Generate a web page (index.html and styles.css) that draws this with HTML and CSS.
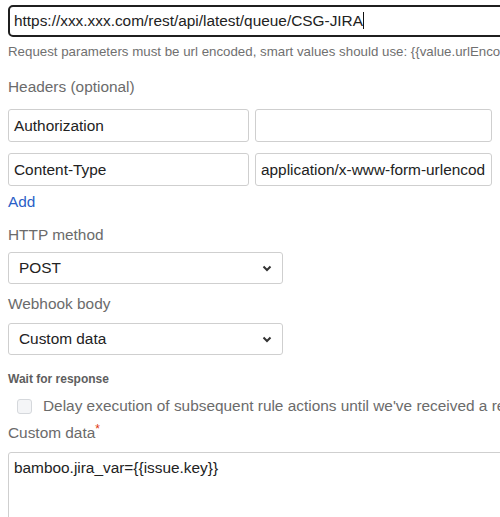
FILE: index.html
```html
<!DOCTYPE html>
<html lang="en">
<head>
    <meta charset="UTF-8">
    <title>Webhook</title>
    <link rel="stylesheet" href="styles.css">
</head>
<body>
    <div class="form">
        <div class="url-input">https://xxx.xxx.com/rest/api/latest/queue/CSG-JIRA<span class="caret"></span></div>
        <div class="help">Request parameters must be url encoded, smart values should use: {{value.urlEncode}}</div>

        <div class="label headers-label">Headers (optional)</div>
        <div class="header-row">
            <div class="field key">Authorization</div>
            <div class="field value"></div>
        </div>
        <div class="header-row">
            <div class="field key">Content-Type</div>
            <div class="field value">application/x-www-form-urlencod</div>
        </div>
        <a class="add">Add</a>

        <div class="label method-label">HTTP method</div>
        <div class="select">
            <span>POST</span>
            <svg width="10" height="7" viewBox="0 0 10 7"><path d="M1.5 1.5 L5 5 L8.5 1.5" fill="none" stroke="#333" stroke-width="2"/></svg>
        </div>

        <div class="label body-label">Webhook body</div>
        <div class="select">
            <span>Custom data</span>
            <svg width="10" height="7" viewBox="0 0 10 7"><path d="M1.5 1.5 L5 5 L8.5 1.5" fill="none" stroke="#333" stroke-width="2"/></svg>
        </div>

        <div class="wait-label">Wait for response</div>
        <div class="check-row">
            <span class="checkbox"></span>
            <span>Delay execution of subsequent rule actions until we've received a response</span>
        </div>

        <div class="label data-label">Custom data<span class="req">*</span></div>
        <div class="textarea">bamboo.jira_var={{issue.key}}</div>
    </div>
</body>
</html>
```

FILE: styles.css
```css
html, body {
    margin: 0;
    padding: 0;
    background: white;
    overflow: hidden;
}
body {
    width: 500px;
    height: 517px;
    font-family: "Liberation Sans", Arial, sans-serif;
    color: #222;
}
.form {
    padding: 5px 0 0 8px;
    width: 700px;
}
.url-input {
    height: 28px;
    width: 600px;
    border: 2px solid #1f1f1f;
    border-radius: 5px;
    padding: 0 4px;
    font-size: 15.4px;
    line-height: 28px;
    white-space: nowrap;
}
.caret {
    display: inline-block;
    width: 1px;
    height: 17px;
    background: #111;
    vertical-align: -3px;
}
.help {
    margin-top: 7px;
    font-size: 13.3px;
    color: #707070;
    white-space: nowrap;
}
.label {
    font-size: 15.4px;
    color: #6b6b6b;
    margin-top: 12px;
    margin-bottom: 10px;
}
.headers-label {
    margin-top: 19px;
    margin-bottom: 13px;
}
.method-label {
    margin-top: 15px;
    margin-bottom: 8px;
}
.body-label {
    margin-top: 11px;
    margin-bottom: 10px;
}
.data-label {
    margin-top: 7px;
    margin-bottom: 10px;
}
.header-row {
    display: flex;
    gap: 6px;
    margin-bottom: 11px;
}
.field {
    height: 31px;
    border: 1px solid #cfcfcf;
    border-radius: 3px;
    padding: 0 5px;
    font-size: 15.4px;
    line-height: 31px;
    white-space: nowrap;
    overflow: hidden;
}
.key {
    width: 229px;
}
.value {
    width: 225px;
}
.add {
    display: block;
    margin-top: -4px;
    font-size: 15.4px;
    color: #2b5fc7;
}
.select {
    width: 253px;
    height: 30px;
    border: 1px solid #cfcfcf;
    border-radius: 3px;
    padding: 0 10px;
    display: flex;
    justify-content: space-between;
    align-items: center;
    font-size: 15.4px;
}
.wait-label {
    margin-top: 17px;
    font-size: 12px;
    font-weight: bold;
    color: #5e5e5e;
}
.check-row {
    display: flex;
    align-items: center;
    gap: 11px;
    margin: 11px 0 0 9px;
    font-size: 15.4px;
    color: #6b6b6b;
    white-space: nowrap;
}
.checkbox {
    width: 13px;
    height: 13px;
    border: 1px solid #d5d8dc;
    border-radius: 3px;
    background: #f4f5f7;
}
.req {
    color: #de350b;
    font-size: 12px;
    vertical-align: 5px;
}
.textarea {
    height: 100px;
    width: 600px;
    border: 1px solid #cfcfcf;
    border-radius: 3px;
    padding: 6px 5px;
    font-size: 15.4px;
}
```
